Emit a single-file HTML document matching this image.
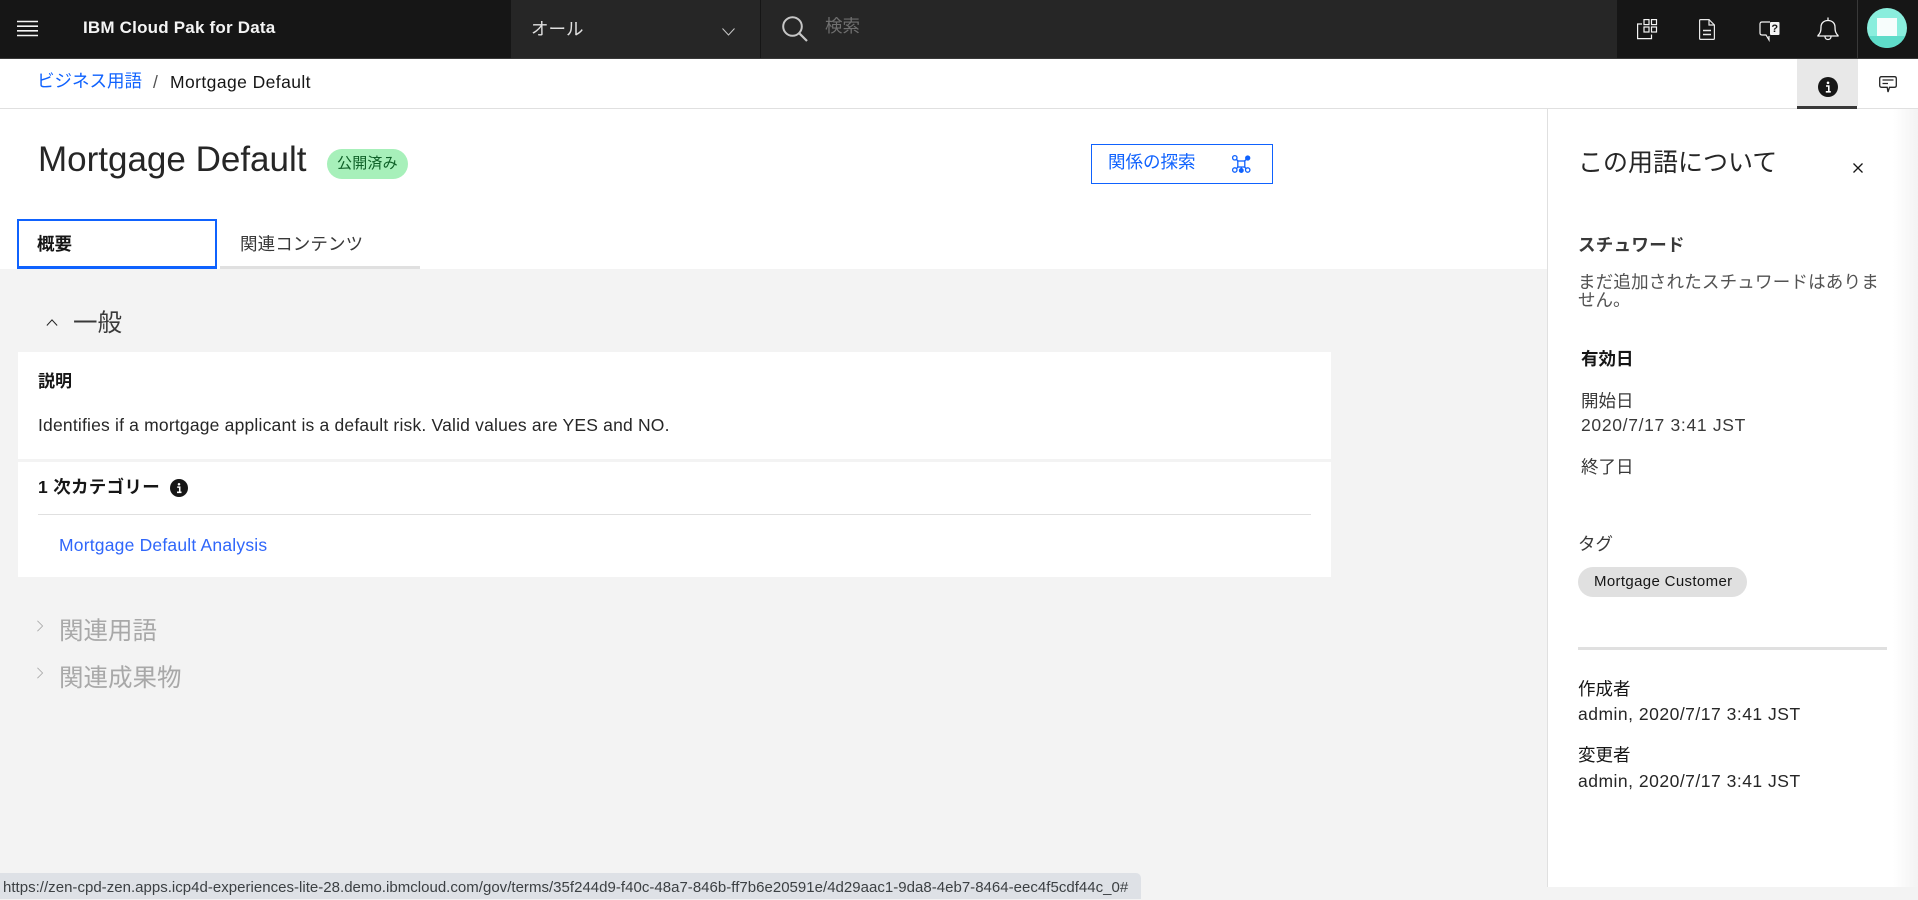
<!DOCTYPE html>
<html lang="ja">
<head>
<meta charset="utf-8">
<title>Mortgage Default</title>
<style>
html,body{margin:0;padding:0;background:#f3f3f3;}
body{width:1918px;height:899px;position:relative;overflow:hidden;font-family:"Liberation Sans","Noto Sans CJK JP",sans-serif;color:#161616;}
.b{position:absolute;}
.t{position:absolute;white-space:nowrap;line-height:24px;height:24px;font-size:17.5px;}
.bold{font-weight:700;}
svg{position:absolute;display:block;overflow:visible;}
</style>
</head>
<body>
<!-- Main surfaces -->
<div class="b" style="left:0;top:59px;width:1918px;height:50px;background:#fff;"></div>
<div class="b" style="left:0;top:108px;width:1918px;height:1px;background:#e0e0e0;"></div>
<div class="b" style="left:0;top:109px;width:1548px;height:160px;background:#fff;"></div>
<div class="b" style="left:1547px;top:109px;width:371px;height:778px;background:#fff;"></div>
<div class="b" style="left:1547px;top:109px;width:1px;height:778px;background:#e0e0e0;"></div>
<div class="b" style="left:1893px;top:109px;width:25px;height:778px;background:linear-gradient(to right,#fff,#f3f3f3);"></div>

<!-- Header -->
<div class="b" style="left:0;top:0;width:1918px;height:58px;background:#161616;"></div>
<div class="b" style="left:511px;top:0;width:1106px;height:58px;background:#262626;"></div>
<div class="b" style="left:760px;top:0;width:1px;height:58px;background:#161616;"></div>
<div class="b" style="left:1857px;top:0;width:1px;height:58px;background:#393939;"></div>
<div class="b" style="left:0;top:58px;width:1918px;height:1px;background:#393939;"></div>

<svg style="left:17px;top:20px" width="21" height="18" viewBox="0 0 21 18"><path d="M0 1.5H21M0 6.2H21M0 10.8H21M0 15.5H21" stroke="#f4f4f4" stroke-width="1.6" fill="none"/></svg>
<div class="t bold" style="left:83px;top:16px;color:#f4f4f4;font-size:17px;letter-spacing:.2px;">IBM Cloud Pak for Data</div>
<div class="t" style="left:531px;top:17px;color:#e0e0e0;">オール</div>
<svg style="left:722px;top:28px" width="13" height="8" viewBox="0 0 13 8"><path d="M.5 .5L6.5 7L12.5 .5" stroke="#c6c6c6" stroke-width="1" fill="none"/></svg>
<svg style="left:782px;top:16px" width="26" height="26" viewBox="0 0 26 26"><circle cx="10.5" cy="10.5" r="9.3" stroke="#c6c6c6" stroke-width="2" fill="none"/><path d="M17.3 17.3L25 25" stroke="#c6c6c6" stroke-width="2.2" fill="none"/></svg>
<div class="t" style="left:825px;top:14px;color:#6f6f6f;">検索</div>

<!-- Header right icons -->
<svg style="left:1637px;top:19px" width="21" height="21" viewBox="0 0 21 21" fill="none" stroke="#f4f4f4" stroke-width="1.2"><rect x="7" y=".6" width="5" height="5"/><rect x="14.5" y=".6" width="5" height="5"/><rect x="7" y="8" width="5" height="5"/><rect x="14.5" y="8" width="5" height="5"/><path d="M5 5H.6V19.6H14.5V15.5"/></svg>
<svg style="left:1699px;top:19px" width="16" height="21" viewBox="0 0 16 21" fill="none" stroke="#e8e8e8" stroke-width="1.2"><path d="M1.6 .6H10L15.4 6V19.4Q15.4 20.4 14.4 20.4H1.6Q.6 20.4 .6 19.4V1.6Q.6 .6 1.6 .6Z"/><path d="M10 .6V6H15.4"/><path d="M4 11.5H12M4 15.5H12" stroke-width="1.4"/></svg>
<svg style="left:1759px;top:21px" width="21" height="20" viewBox="0 0 21 20" fill="none" stroke="#f4f4f4" stroke-width="1.2"><path d="M11 1H3Q1 1 1 3V12Q1 14 3 14H7L10 19V15"/><rect x="11" y="1" width="9.5" height="13" fill="#f4f4f4" stroke="none" rx="1"/><text x="15.8" y="11" font-size="11" font-weight="700" text-anchor="middle" fill="#161616" stroke="none" font-family="Liberation Sans">?</text></svg>
<svg style="left:1817px;top:17px" width="22" height="24" viewBox="0 0 22 24" fill="none" stroke="#f4f4f4" stroke-width="1.3"><path d="M11 .5V3.5M1 18.5C3.5 16 4 14 4 10C4 6 7 3.5 11 3.5C15 3.5 18 6 18 10C18 14 18.5 16 21 18.5V19H1Z"/><path d="M8 19.5C8 23.5 14 23.5 14 19.5"/></svg>
<div class="b" style="left:1867px;top:8px;width:40px;height:40px;border-radius:50%;overflow:hidden;background:#8aeedd;">
  <div class="b" style="left:0;top:28px;width:40px;height:12px;background:#5fdcc9;"></div>
  <div class="b" style="left:10px;top:10px;width:20px;height:18px;background:#f7fdfc;"></div>
</div>

<!-- Breadcrumb -->
<div class="t" style="left:37px;top:69px;color:#0f62fe;">ビジネス用語</div>
<div class="t" style="left:153px;top:70px;color:#525252;">/</div>
<div class="t" style="left:170px;top:70px;letter-spacing:.42px;">Mortgage Default</div>

<!-- Right tab icons -->
<div class="b" style="left:1797px;top:59px;width:61px;height:47px;background:#e8e8e8;"></div>
<div class="b" style="left:1797px;top:106px;width:60px;height:3px;background:#393939;"></div>
<svg style="left:1818px;top:77px" width="20" height="20" viewBox="0 0 20 20"><circle cx="10" cy="10" r="10" fill="#161616"/><path d="M8 9H10.8V14.5M7.8 14.8H12.8" stroke="#fff" stroke-width="1.6" fill="none"/><circle cx="10" cy="5.8" r="1.3" fill="#fff"/></svg>
<svg style="left:1879px;top:76px" width="18" height="17" viewBox="0 0 18 17" fill="none" stroke="#262626" stroke-width="1.3"><path d="M2.5 .7H15.5Q17.3 .7 17.3 2.5V9.5Q17.3 11.3 15.5 11.3H10.5L9 16L8.2 11.3H2.5Q.7 11.3 .7 9.5V2.5Q.7 .7 2.5 .7Z"/><path d="M3.5 4H14.5M3.5 7.5H9"/></svg>

<!-- Title row -->
<div class="t" style="left:38px;top:140px;height:40px;line-height:40px;font-size:35px;color:#262626;">Mortgage Default</div>
<div class="b" style="left:327px;top:149px;width:81px;height:30px;border-radius:15px;background:#a7f0ba;"></div>
<div class="t" style="left:337px;top:152px;font-size:15px;letter-spacing:.2px;color:#0e6027;">公開済み</div>

<div class="b" style="left:1091px;top:144px;width:180px;height:38px;border:1px solid #0f62fe;"></div>
<div class="t" style="left:1108px;top:150px;color:#0f62fe;">関係の探索</div>
<svg style="left:1232px;top:155px" width="19" height="18" viewBox="0 0 19 18" fill="none" stroke="#0f62fe" stroke-width="1.3"><circle cx="2.8" cy="2.8" r="2.2"/><circle cx="15.7" cy="3" r="2" fill="#0f62fe"/><circle cx="2.8" cy="15" r="2.2"/><circle cx="15.7" cy="15" r="2.2"/><circle cx="9.3" cy="15.5" r="1.8" fill="#0f62fe"/><rect x="5.8" y="6" width="7" height="6"/><path d="M4.5 4.5L6 6M14 4.6L12.6 6M4.5 13.5L6 12M14 13.5L12.6 12M9.3 12V14"/></svg>

<!-- Tabs -->
<div class="b" style="left:17px;top:219px;width:196px;height:45px;border:2px solid #0f62fe;border-bottom-width:3px;background:#fff;"></div>
<div class="t bold" style="left:37px;top:232px;">概要</div>
<div class="t" style="left:240px;top:232px;letter-spacing:.1px;color:#393939;">関連コンテンツ</div>
<div class="b" style="left:220px;top:266px;width:200px;height:3px;background:#e0e0e0;"></div>

<!-- General -->
<svg style="left:46px;top:319px" width="12" height="7" viewBox="0 0 14 8"><path d="M1 7.5L7 1L13 7.5" stroke="#262626" stroke-width="1.2" fill="none"/></svg>
<div class="t" style="left:73px;top:308px;height:32px;line-height:32px;font-size:24.5px;color:#393939;">一般</div>

<div class="b" style="left:18px;top:352px;width:1313px;height:107px;background:#fff;"></div>
<div class="b" style="left:18px;top:462px;width:1313px;height:115px;background:#fff;"></div>
<div class="t bold" style="left:38px;top:370px;font-size:17px;">説明</div>
<div class="t" style="left:38px;top:413px;letter-spacing:.19px;color:#262626;">Identifies if a mortgage applicant is a default risk. Valid values are YES and NO.</div>
<div class="t bold" style="left:38px;top:475px;letter-spacing:.3px;">1 次カテゴリー</div>
<svg style="left:170px;top:479px" width="18" height="18" viewBox="0 0 20 20"><circle cx="10" cy="10" r="10" fill="#161616"/><path d="M8 9H10.8V14.5M7.8 14.8H12.8" stroke="#fff" stroke-width="1.7" fill="none"/><circle cx="10" cy="5.8" r="1.4" fill="#fff"/></svg>
<div class="b" style="left:38px;top:514px;width:1273px;height:1px;background:#e0e0e0;"></div>
<div class="t" style="left:59px;top:533px;letter-spacing:.2px;color:#2f66fa;">Mortgage Default Analysis</div>

<svg style="left:37px;top:620px" width="6" height="12" viewBox="0 0 7 13"><path d="M.5 .5L6.5 6.5L.5 12.5" stroke="#a8a8a8" stroke-width="1" fill="none"/></svg>
<div class="t" style="left:59px;top:616px;height:32px;line-height:32px;font-size:24.5px;color:#a8a8a8;">関連用語</div>
<svg style="left:37px;top:667px" width="6" height="12" viewBox="0 0 7 13"><path d="M.5 .5L6.5 6.5L.5 12.5" stroke="#a8a8a8" stroke-width="1" fill="none"/></svg>
<div class="t" style="left:59px;top:663px;height:32px;line-height:32px;font-size:24.5px;color:#a8a8a8;">関連成果物</div>

<!-- Right panel -->
<div class="t" style="left:1578px;top:147px;height:32px;line-height:32px;font-size:25px;color:#262626;">この用語について</div>
<svg style="left:1853px;top:163px" width="10" height="10" viewBox="0 0 10 10"><path d="M.5 .5L9.5 9.5M9.5 .5L.5 9.5" stroke="#161616" stroke-width="1.3" fill="none"/></svg>
<div class="t bold" style="left:1578px;top:233px;letter-spacing:.3px;color:#393939;">スチュワード</div>
<div class="t" style="left:1578px;top:270px;letter-spacing:.2px;color:#525252;">まだ追加されたスチュワードはありま</div>
<div class="t" style="left:1578px;top:288px;color:#525252;">せん。</div>
<div class="t bold" style="left:1581px;top:347px;">有効日</div>
<div class="t" style="left:1581px;top:389px;color:#393939;">開始日</div>
<div class="t" style="left:1581px;top:413px;letter-spacing:.68px;color:#393939;">2020/7/17 3:41 JST</div>
<div class="t" style="left:1581px;top:455px;color:#393939;">終了日</div>
<div class="t" style="left:1578px;top:532px;color:#393939;">タグ</div>
<div class="b" style="left:1578px;top:567px;width:169px;height:30px;border-radius:15px;background:#e0e0e0;"></div>
<div class="t" style="left:1594px;top:570px;font-size:15px;letter-spacing:.35px;">Mortgage Customer</div>
<div class="b" style="left:1578px;top:647px;width:309px;height:3px;background:#e0e0e0;"></div>
<div class="t" style="left:1578px;top:677px;">作成者</div>
<div class="t" style="left:1578px;top:702px;letter-spacing:.5px;color:#262626;">admin, 2020/7/17 3:41 JST</div>
<div class="t" style="left:1578px;top:743px;">変更者</div>
<div class="t" style="left:1578px;top:769px;letter-spacing:.5px;color:#262626;">admin, 2020/7/17 3:41 JST</div>

<!-- Status bubble -->
<div class="b" style="left:0;top:873px;width:1141px;height:26px;background:#dee1e6;border-top-right-radius:5px;"></div>
<div class="t" style="left:3px;top:876px;font-size:15px;letter-spacing:.02px;color:#3c4043;">https://zen-cpd-zen.apps.icp4d-experiences-lite-28.demo.ibmcloud.com/gov/terms/35f244d9-f40c-48a7-846b-ff7b6e20591e/4d29aac1-9da8-4eb7-8464-eec4f5cdf44c_0#</div>
</body>
</html>
